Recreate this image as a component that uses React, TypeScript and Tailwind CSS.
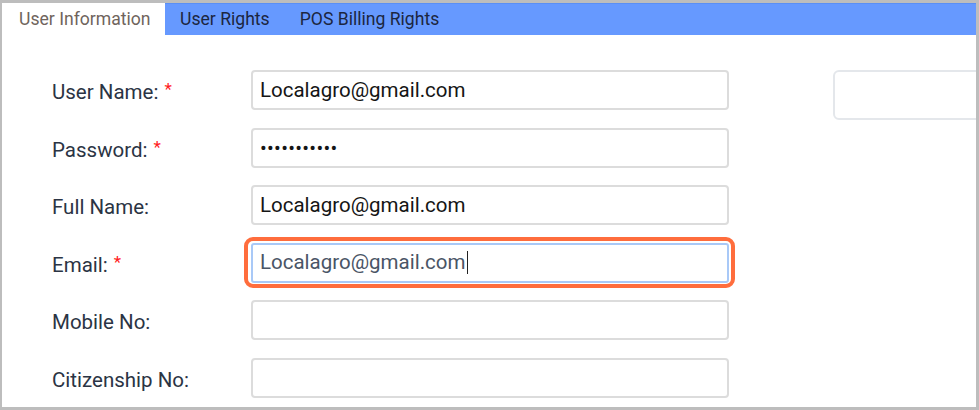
const tabs = ['User Information', 'User Rights', 'POS Billing Rights'];

type Field = {
	label: string;
	required?: boolean;
	value?: string;
	focused?: boolean;
};

const fields: Field[] = [
	{ label: 'User Name:', required: true, value: 'Localagro@gmail.com' },
	{ label: 'Password:', required: true, value: '•••••••••••' },
	{ label: 'Full Name:', value: 'Localagro@gmail.com' },
	{ label: 'Email:', required: true, value: 'Localagro@gmail.com', focused: true },
	{ label: 'Mobile No:' },
	{ label: 'Citizenship No:' },
];

const App = () => {
	return (
		<div
			className="w-[979px] h-[410px] overflow-hidden bg-white border-t-[3px] border-l-2 border-r-[3px] border-b-[3px] border-[#bdbdbd] flex flex-col"
			style={{ fontFamily: 'Roboto, "Liberation Sans", sans-serif' }}
		>
			{/* tab bar */}
			<div className="h-[32px] flex bg-[#6699ff] border-t border-[#5a8ff5] shrink-0">
				{tabs.map((tab, i) =>
					i === 0 ? (
						<div
							key={tab}
							className="w-[163px] -mt-px h-[32px] bg-white flex items-center pl-[17px] text-[17.6px] text-[#6f645c]"
						>
							{tab}
						</div>
					) : (
						<div key={tab} className="flex items-center px-[15px] text-[17.6px] text-[#1c2640]">
							{tab}
						</div>
					),
				)}
			</div>

			{/* form */}
			<div className="flex pt-[35px]">
				<div className="ml-[50px] grid grid-cols-[199px_478px] gap-y-[17.5px]">
					{fields.map((f) => (
						<div key={f.label} className="contents">
							<div className="h-[40px] flex items-center pt-[5px] text-[20.5px] text-[#2b3444]">
								{f.label}
								{f.required && <span className="ml-[6px] text-[17px] text-[#ff2020] -mt-[5px]">*</span>}
							</div>
							<div className="relative h-[40px]">
								{f.focused && (
									<div className="absolute -left-[7px] -right-[6px] -top-[5.5px] -bottom-[5px] border-4 border-[#ff6d3d] rounded-[9px]" />
								)}
								<div
									className={
										f.focused
											? 'relative h-full rounded-[3px] border-2 border-[#a9c9f7] bg-white flex items-center pl-[7px] text-[20.5px] text-[#4a5566]'
											: 'h-full rounded-[4px] border-2 border-[#dcdcdc] bg-white flex items-center pl-[7px] text-[20.5px] text-[#151515]'
									}
								>
									{f.value && (
										<span className={f.label === 'Password:' ? 'text-[20px] tracking-[0.3px]' : ''}>{f.value}</span>
									)}
									{f.focused && <span className="w-[1.5px] h-[23px] bg-[#222] ml-px" />}
								</div>
							</div>
						</div>
					))}
				</div>
				<div className="ml-[104px] w-[160px] h-[50px] shrink-0 rounded-[6px] border-2 border-[#e4e7eb]" />
			</div>
		</div>
	);
};

export default App;
